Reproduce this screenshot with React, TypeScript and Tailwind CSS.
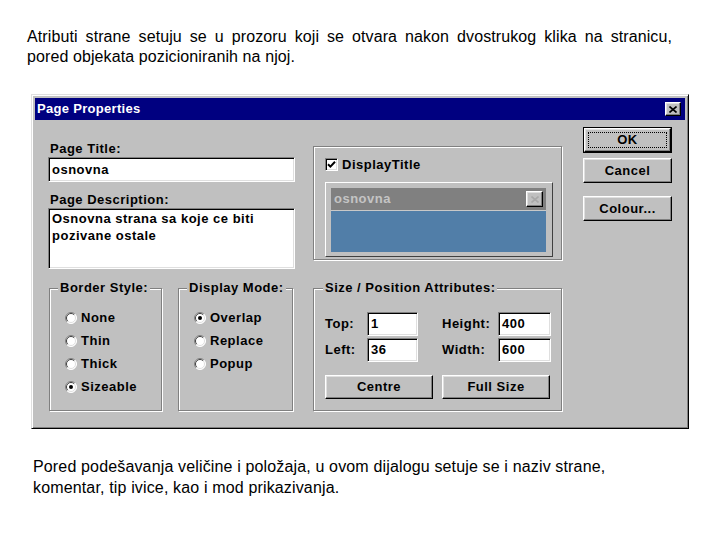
import React from 'react';

// Win95-ish bevels
const SUNKEN =
  'bg-white border border-t-[#808080] border-l-[#808080] border-r-white border-b-white shadow-[inset_1px_1px_0_#000,inset_-1px_-1px_0_#dfdfdf]';
const RAISED =
  'bg-[#c0c0c0] border border-t-white border-l-white border-r-black border-b-black shadow-[inset_-1px_-1px_0_#808080,inset_1px_1px_0_#dfdfdf]';
const ETCHED = 'border border-[#808080] shadow-[inset_1px_1px_0_#fff,1px_1px_0_#fff]';

function Radio({ checked }: { checked?: boolean }) {
  return (
    <svg width="12" height="12" viewBox="0 0 12 12" className="shrink-0">
      <circle cx="6" cy="6" r="5.5" fill="#fff" />
      <path d="M2.1 9.9A5.5 5.5 0 0 1 9.9 2.1" fill="none" stroke="#808080" />
      <path d="M2.8 9.2A4.5 4.5 0 0 1 9.2 2.8" fill="none" stroke="#404040" />
      <path d="M9.9 2.1A5.5 5.5 0 0 1 2.1 9.9" fill="none" stroke="#fff" />
      <path d="M9.2 2.8A4.5 4.5 0 0 1 2.8 9.2" fill="none" stroke="#dfdfdf" />
      {checked && <circle cx="6" cy="6" r="2" fill="#000" />}
    </svg>
  );
}

function CloseGlyph({ color = '#000' }: { color?: string }) {
  return (
    <svg width="8" height="7" viewBox="0 0 8 7">
      <path d="M0.5 0.5L7.5 6.5M7.5 0.5L0.5 6.5" stroke={color} strokeWidth="1.6" />
    </svg>
  );
}

function RadioGroup({ title, items, selected, width }: { title: string; items: string[]; selected: number; width: string }) {
  return (
    <fieldset className={`${ETCHED} ${width} h-[131px] m-0 p-0`}>
      <legend className="ml-[8px] px-[2px] bg-[#c0c0c0] whitespace-nowrap">{title}</legend>
      <div className="pl-[15px] pt-[10px]">
        {items.map((label, i) => (
          <div key={label} className="h-[23px] flex items-center gap-[4px]">
            <Radio checked={i === selected} />
            <span>{label}</span>
          </div>
        ))}
      </div>
    </fieldset>
  );
}

export default function App() {
  return (
    <div className="w-[720px] h-[540px] bg-white overflow-hidden font-['Liberation_Sans',Arial,sans-serif] text-black">
      <div className="ml-[27px] mt-[27px] w-[645px] text-[16px] leading-[20px] tracking-[0.1px]">
        <div className="text-justify [text-align-last:justify]">
          Atributi strane setuju se u prozoru koji se otvara nakon dvostrukog klika na stranicu,
        </div>
        <div>pored objekata pozicioniranih na njoj.</div>
      </div>

      {/* dialog window */}
      <div className="ml-[31px] mt-[27px] w-[658px] h-[335px] p-[3px] bg-[#c0c0c0] border border-t-[#dfdfdf] border-l-[#dfdfdf] border-r-black border-b-black shadow-[inset_1px_1px_0_#fff,inset_-1px_-1px_0_#808080] flex flex-col text-[13px] font-bold leading-[16px] tracking-[0.5px]">
        <div className="h-[22px] bg-[#000080] flex items-center justify-between pl-[2px] pr-[4px]">
          <span className="text-white tracking-[0.3px]">Page Properties</span>
          <button className={`${RAISED} w-[16px] h-[14px] flex items-center justify-center`}>
            <CloseGlyph />
          </button>
        </div>

        <div className="flex pl-[13px]">
          {/* left column */}
          <div className="w-[247px] pt-[21px] flex flex-col">
            <label className="pl-[2px]">Page Title:</label>
            <div className={`${SUNKEN} h-[25px] flex items-center pl-[3px]`}>osnovna</div>
            <label className="mt-[10px] pl-[2px]">Page Description:</label>
            <div className={`${SUNKEN} h-[61px] pl-[3px] pt-[1px] leading-[17px]`}>
              Osnovna strana sa koje ce biti
              <br />
              pozivane ostale
            </div>
            <div className="mt-[11px] flex gap-[16px] pl-[1px]">
              <RadioGroup title="Border Style:" items={['None', 'Thin', 'Thick', 'Sizeable']} selected={3} width="w-[113px]" />
              <RadioGroup title="Display Mode:" items={['Overlap', 'Replace', 'Popup']} selected={0} width="w-[115px]" />
            </div>
          </div>

          {/* middle column */}
          <div className="ml-[18px] w-[249px] pt-[26px] flex flex-col">
            <div className={`${ETCHED} h-[114px] pl-[11px] pt-[11px]`}>
              <div className="flex items-center gap-[4px] h-[13px]">
                <span className={`${SUNKEN} w-[13px] h-[13px] flex items-center justify-center`}>
                  <svg width="9" height="9" viewBox="0 0 9 9">
                    <path d="M1 4.2L3.4 6.6L8 1.8" fill="none" stroke="#000" strokeWidth="2" />
                  </svg>
                </span>
                <span>DisplayTitle</span>
              </div>
              <div className="mt-[11px] w-[228px] h-[75px] border border-t-white border-l-white border-r-[#404040] border-b-[#404040] pt-[5px] pl-[5px] pr-[6px] pb-[4px] flex flex-col">
                <div className="h-[22px] bg-[#808080] flex items-center justify-between pl-[3px] pr-[3px] text-[#c4c4c4]">
                  <span>osnovna</span>
                  <span className={`${RAISED} w-[17px] h-[16px] flex items-center justify-center`}>
                    <CloseGlyph color="#a8a8a8" />
                  </span>
                </div>
                <div className="h-px bg-[#c8c8c8]" />
                <div className="flex-1 bg-[#517ea8]" />
              </div>
            </div>

            <fieldset className={`${ETCHED} mt-[20px] h-[131px] m-0 p-0`}>
              <legend className="ml-[9px] px-[2px] bg-[#c0c0c0] whitespace-nowrap">Size / Position Attributes:</legend>
              <div className="pl-[11px] pt-[16px]">
                <div className="flex items-center h-[24px]">
                  <span className="w-[42px]">Top:</span>
                  <div className={`${SUNKEN} w-[51px] h-[24px] flex items-center pl-[3px]`}>1</div>
                  <span className="ml-[24px] w-[56px]">Height:</span>
                  <div className={`${SUNKEN} w-[53px] h-[24px] flex items-center pl-[3px]`}>400</div>
                </div>
                <div className="flex items-center h-[24px] mt-[2px]">
                  <span className="w-[42px]">Left:</span>
                  <div className={`${SUNKEN} w-[51px] h-[24px] flex items-center pl-[3px]`}>36</div>
                  <span className="ml-[24px] w-[56px]">Width:</span>
                  <div className={`${SUNKEN} w-[53px] h-[24px] flex items-center pl-[3px]`}>600</div>
                </div>
                <div className="flex gap-[9px] mt-[13px]">
                  <button className={`${RAISED} w-[108px] h-[24px] tracking-[0.5px]`}>Centre</button>
                  <button className={`${RAISED} w-[108px] h-[24px] tracking-[0.5px]`}>Full Size</button>
                </div>
              </div>
            </fieldset>
          </div>

          {/* buttons */}
          <div className="ml-[21px] w-[89px] pt-[7px] flex flex-col">
            <div className="border border-black">
              <button className={`${RAISED} w-full h-[24px] flex items-center justify-center p-[3px] tracking-[0.5px]`}>
                <span className="w-full h-full border border-dotted border-black flex items-center justify-center">OK</span>
              </button>
            </div>
            <button className={`${RAISED} mt-[5px] h-[25px] tracking-[0.5px]`}>Cancel</button>
            <button className={`${RAISED} mt-[13px] h-[25px] tracking-[0.5px]`}>Colour...</button>
          </div>
        </div>
      </div>

      <p className="ml-[33px] mt-[27px] text-[16px] leading-[21px] tracking-[0.15px]">
        Pored podešavanja veličine i položaja, u ovom dijalogu setuje se i naziv strane,
        <br />
        komentar, tip ivice, kao i mod prikazivanja.
      </p>
    </div>
  );
}
